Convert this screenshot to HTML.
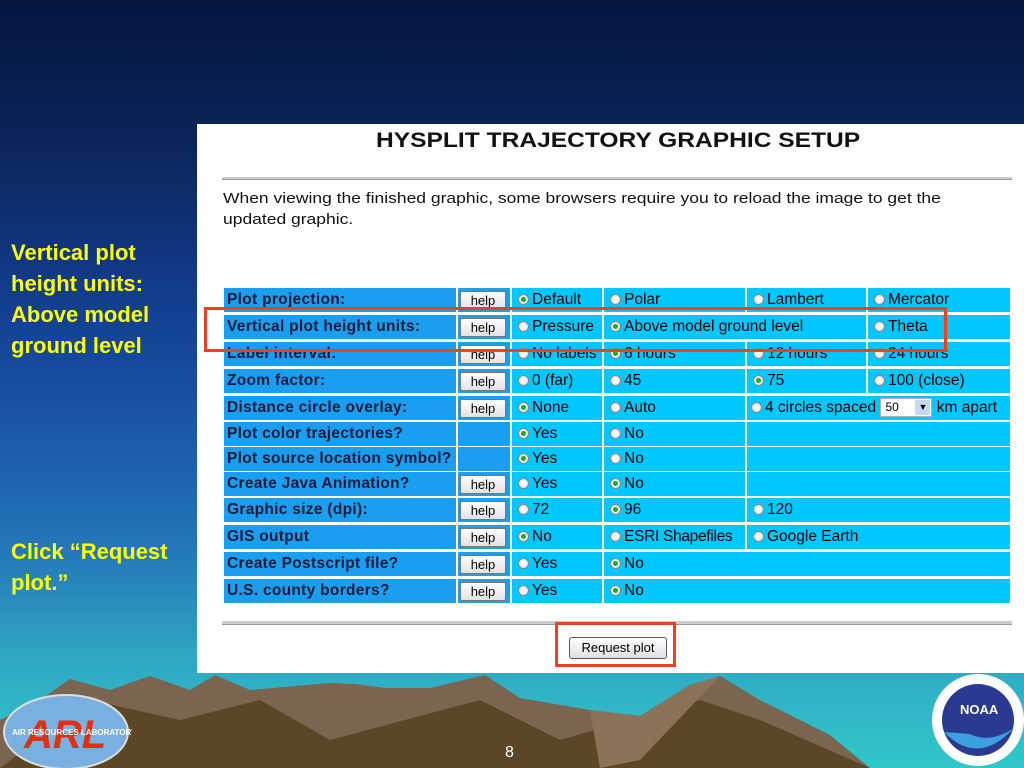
<!DOCTYPE html><html><head><style>
*{margin:0;padding:0;box-sizing:border-box}
body{width:1024px;height:768px;overflow:hidden;position:relative;font-family:"Liberation Sans",sans-serif;
background:linear-gradient(180deg,#061640 0%,#0a2458 18%,#123c8c 38%,#1a55a8 55%,#2478b8 72%,#30a8c4 86%,#30c8c8 100%);}
.a{position:absolute}
.side{color:#ffff00;font-weight:bold;font-size:22px;line-height:31px;left:11px}
.panel{left:197px;top:124px;width:827px;height:549px;background:#fff}
.c{position:absolute;height:24px;font-size:15.5px;color:#000;line-height:24px;white-space:nowrap;overflow:hidden;padding-left:6px}
.l{background:#1a9ff0;font-weight:bold;padding-left:3px;color:#0a1a3a;letter-spacing:0.3px}
.o{background:#00c8ff}
.h{background:#1a9ff0}
.b{position:absolute;left:2px;top:3px;width:46px;height:19px;background:linear-gradient(#fff,#e2e2e2);border:1px solid #777;border-radius:2px;font-size:13px;line-height:17px;text-align:center;color:#000;letter-spacing:0}
.r{display:inline-block;width:11px;height:11px;border-radius:50%;border:1px solid #888;background:radial-gradient(#fff,#ddd);vertical-align:-1px;margin-right:3px;position:relative}
.r.k::after{content:"";position:absolute;left:2px;top:2px;width:5px;height:5px;border-radius:50%;background:#2a2}
</style></head><body>
<div class="a side" style="top:237px">Vertical plot<br>height units:<br>Above model<br>ground level</div>
<div class="a side" style="top:536px">Click “Request<br>plot.”</div>
<div class="a panel"></div>
<div class="a" style="left:376px;top:129px;font-size:21px;font-weight:bold;color:#111;white-space:nowrap;transform:scaleX(1.17);transform-origin:0 0">HYSPLIT TRAJECTORY GRAPHIC SETUP</div>
<div class="a" style="left:222px;top:177px;width:790px;height:3px;background:#ccc;border-bottom:1px solid #999"></div>
<div class="a" style="left:223px;top:188px;width:660px;font-size:15px;line-height:21px;color:#111;transform:scaleX(1.165);transform-origin:0 0">When viewing the finished graphic, some browsers require you to reload the image to get the updated graphic.</div>

<div class="c l" style="left:224px;top:288px;width:232px">Plot projection:</div><div class="c h" style="left:458px;top:288px;width:52px"><div class="b">help</div></div><div class="c o" style="left:512px;top:288px;width:90px"><span class="r k"></span>Default</div><div class="c o" style="left:604px;top:288px;width:141px"><span class="r"></span>Polar</div><div class="c o" style="left:747px;top:288px;width:119px"><span class="r"></span>Lambert</div><div class="c o" style="left:868px;top:288px;width:142px"><span class="r"></span>Mercator</div>

<div class="c l" style="left:224px;top:315px;width:232px">Vertical plot height units:</div><div class="c h" style="left:458px;top:315px;width:52px"><div class="b">help</div></div><div class="c o" style="left:512px;top:315px;width:90px"><span class="r"></span>Pressure</div><div class="c o" style="left:604px;top:315px;width:262px"><span class="r k"></span>Above model ground level</div><div class="c o" style="left:868px;top:315px;width:142px"><span class="r"></span>Theta</div>

<div class="c l" style="left:224px;top:342px;width:232px">Label interval:</div><div class="c h" style="left:458px;top:342px;width:52px"><div class="b">help</div></div><div class="c o" style="left:512px;top:342px;width:90px"><span class="r"></span>No labels</div><div class="c o" style="left:604px;top:342px;width:141px"><span class="r k"></span>6 hours</div><div class="c o" style="left:747px;top:342px;width:119px"><span class="r"></span>12 hours</div><div class="c o" style="left:868px;top:342px;width:142px"><span class="r"></span>24 hours</div>

<div class="c l" style="left:224px;top:369px;width:232px">Zoom factor:</div><div class="c h" style="left:458px;top:369px;width:52px"><div class="b">help</div></div><div class="c o" style="left:512px;top:369px;width:90px"><span class="r"></span>0 (far)</div><div class="c o" style="left:604px;top:369px;width:141px"><span class="r"></span>45</div><div class="c o" style="left:747px;top:369px;width:119px"><span class="r k"></span>75</div><div class="c o" style="left:868px;top:369px;width:142px"><span class="r"></span>100 (close)</div>

<div class="c l" style="left:224px;top:396px;width:232px">Distance circle overlay:</div><div class="c h" style="left:458px;top:396px;width:52px"><div class="b">help</div></div><div class="c o" style="left:512px;top:396px;width:90px"><span class="r k"></span>None</div><div class="c o" style="left:604px;top:396px;width:141px"><span class="r"></span>Auto</div><div class="c o" style="left:747px;top:396px;width:263px;padding-left:4px"><span class="r"></span>4 circles spaced <span style="display:inline-block;width:52px;height:19px;background:#fff;border:1px solid #aac;font-size:12px;line-height:17px;vertical-align:middle;padding-left:4px;position:relative">50<span style="position:absolute;right:1px;top:1px;width:15px;height:15px;background:#c8d8f0;font-size:9px;text-align:center;line-height:15px">▼</span></span> km apart</div>

<div class="c l" style="left:224px;top:422px;width:232px">Plot color trajectories?</div><div class="c h" style="left:458px;top:422px;width:52px"></div><div class="c o" style="left:512px;top:422px;width:90px"><span class="r k"></span>Yes</div><div class="c o" style="left:604px;top:422px;width:141px"><span class="r"></span>No</div><div class="c o" style="left:747px;top:422px;width:263px"></div>

<div class="c l" style="left:224px;top:447px;width:232px">Plot source location symbol?</div><div class="c h" style="left:458px;top:447px;width:52px"></div><div class="c o" style="left:512px;top:447px;width:90px"><span class="r k"></span>Yes</div><div class="c o" style="left:604px;top:447px;width:141px"><span class="r"></span>No</div><div class="c o" style="left:747px;top:447px;width:263px"></div>

<div class="c l" style="left:224px;top:472px;width:232px">Create Java Animation?</div><div class="c h" style="left:458px;top:472px;width:52px"><div class="b">help</div></div><div class="c o" style="left:512px;top:472px;width:90px"><span class="r"></span>Yes</div><div class="c o" style="left:604px;top:472px;width:141px"><span class="r k"></span>No</div><div class="c o" style="left:747px;top:472px;width:263px"></div>

<div class="c l" style="left:224px;top:498px;width:232px">Graphic size (dpi):</div><div class="c h" style="left:458px;top:498px;width:52px"><div class="b">help</div></div><div class="c o" style="left:512px;top:498px;width:90px"><span class="r"></span>72</div><div class="c o" style="left:604px;top:498px;width:141px"><span class="r k"></span>96</div><div class="c o" style="left:747px;top:498px;width:263px"><span class="r"></span>120</div>

<div class="c l" style="left:224px;top:525px;width:232px">GIS output</div><div class="c h" style="left:458px;top:525px;width:52px"><div class="b">help</div></div><div class="c o" style="left:512px;top:525px;width:90px"><span class="r k"></span>No</div><div class="c o" style="left:604px;top:525px;width:141px;letter-spacing:-0.3px"><span class="r"></span>ESRI Shapefiles</div><div class="c o" style="left:747px;top:525px;width:263px"><span class="r"></span>Google Earth</div>

<div class="c l" style="left:224px;top:552px;width:232px">Create Postscript file?</div><div class="c h" style="left:458px;top:552px;width:52px"><div class="b">help</div></div><div class="c o" style="left:512px;top:552px;width:90px"><span class="r"></span>Yes</div><div class="c o" style="left:604px;top:552px;width:406px"><span class="r k"></span>No</div>

<div class="c l" style="left:224px;top:579px;width:232px">U.S. county borders?</div><div class="c h" style="left:458px;top:579px;width:52px"><div class="b">help</div></div><div class="c o" style="left:512px;top:579px;width:90px"><span class="r"></span>Yes</div><div class="c o" style="left:604px;top:579px;width:406px"><span class="r k"></span>No</div>

<div class="a" style="left:222px;top:621px;width:790px;height:4px;background:#ccc;border-bottom:1px solid #999"></div>
<div class="a" style="left:569px;top:637px;width:98px;height:22px;background:linear-gradient(#fff,#e0e0e0);border:1px solid #557;border-radius:3px;font-size:13px;line-height:20px;text-align:center">Request plot</div>
<div class="a" style="left:555px;top:622px;width:121px;height:45px;border:3px solid #f04020"></div>
<div class="a" style="left:204px;top:307px;width:743px;height:45px;border:3px solid #f04020"></div>

<svg class="a" style="left:0;top:670px" width="1024" height="98" viewBox="0 670 1024 98">
<path d="M40 700 L70 679 L110 690 L150 676 L190 690 L215 675 L250 690 L330 683 L355 684 L385 688 L430 688 L485 675 L520 698 L590 710 L640 716 L690 685 L720 676 L760 700 L830 735 L870 768 L0 768 L0 720 Z" fill="#7a6650"/>
<path d="M90 700 L180 720 L260 700 L330 740 L480 700 L560 740 L700 700 L760 720 L870 768 L0 768 Z" fill="#5b4626"/>
<path d="M590 710 L640 716 L690 685 L720 676 L640 760 L600 768 Z" fill="#8a7358"/>
</svg>
<svg class="a" style="left:2px;top:690px" width="130" height="78"><ellipse cx="64" cy="42" rx="62" ry="37" fill="#7ab0e0" stroke="#ddd" stroke-width="2"/><text x="22" y="58" font-family="Liberation Sans" font-weight="bold" font-style="italic" font-size="40" fill="#e03010">ARL</text><text x="10" y="45" font-family="Liberation Sans" font-size="8" font-weight="bold" fill="#fff">AIR RESOURCES LABORATORY</text></svg>
<svg class="a" style="left:930px;top:672px" width="94" height="96"><circle cx="48" cy="48" r="46" fill="#fff"/><circle cx="48" cy="48" r="36" fill="#2a3a90"/><path d="M14 60 Q48 95 84 56 Q60 72 40 62Z" fill="#3aa0e0"/><text x="30" y="42" font-family="Liberation Sans" font-weight="bold" font-size="13" fill="#fff">NOAA</text></svg>
<div class="a" style="left:505px;top:744px;font-size:16px;color:#fff">8</div>
</body></html>
